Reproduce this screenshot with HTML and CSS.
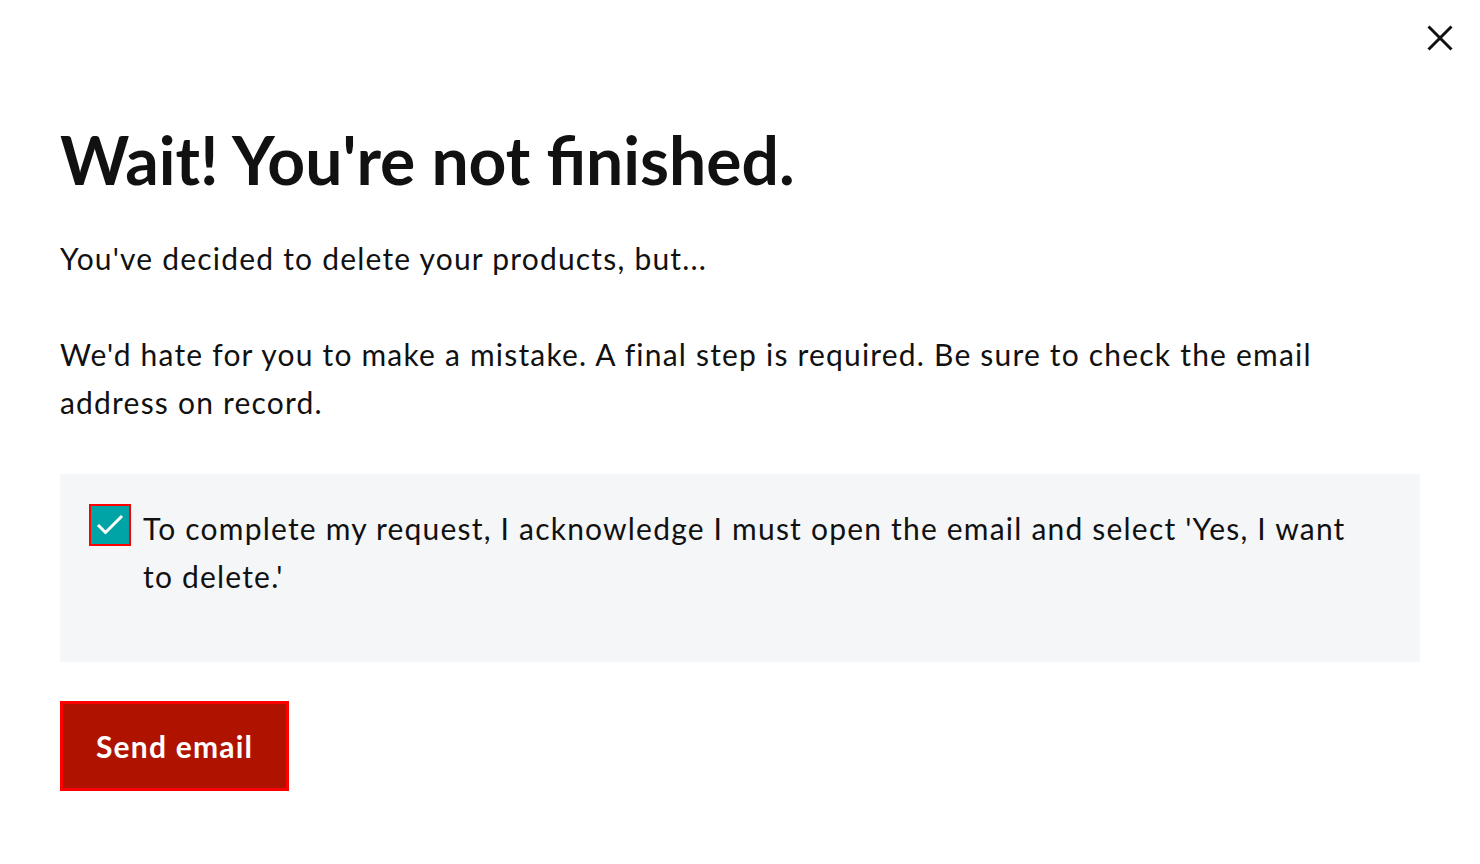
FILE: index.html
```html
<!DOCTYPE html>
<html lang="en">
<head>
<meta charset="utf-8">
<title>Wait! You're not finished.</title>
<link rel="stylesheet" href="styles.css">
</head>
<body>
<div class="dialog">
  <button class="close" aria-label="Close">
    <svg width="26" height="26" viewBox="0 0 26 26"><path d="M1.5 1.5 L24.5 24.5 M24.5 1.5 L1.5 24.5" stroke="#111" stroke-width="3" fill="none"/></svg>
  </button>
  <h1 class="title">Wait! You're not finished.</h1>
  <p class="text">You've decided to delete your products, but...</p>
  <p class="text">We'd hate for you to make a mistake. A final step is required. Be sure to check the email address on record.</p>
  <div class="ack">
    <label class="ack-row">
      <span class="check">
        <svg width="32" height="26" viewBox="0 0 32 26"><path d="M4 13 L11.5 20.5 L28 4" stroke="#fff" stroke-width="3" fill="none"/></svg>
      </span>
      <span class="ack-text">To complete my request, I acknowledge I must open the email and select 'Yes, I want to delete.'</span>
    </label>
  </div>
  <button class="send">Send email</button>
</div>
</body>
</html>
```
FILE: styles.css
```css
html, body {
  margin: 0;
  background: #fff;
}
body {
  font-family: Lato, "Noto Sans", sans-serif;
  color: #111;
}
.dialog {
  position: relative;
  padding: 112px 60px 40px 60px;
}
.close {
  position: absolute;
  top: 25px;
  right: 27px;
  background: none;
  border: 0;
  padding: 0;
  width: 26px;
  height: 26px;
  cursor: pointer;
}
.title {
  margin: 0 0 26px 0;
  font-size: 66px;
  font-weight: 700;
  line-height: 96px;
  color: #111;
}
.text {
  margin: 0 0 48px 0;
  font-size: 30px;
  letter-spacing: 1.2px;
  line-height: 48px;
  color: #111;
}
.ack {
  background: #f5f6f8;
  padding: 30px 40px 62px 29px;
  margin-bottom: 39px;
}
.ack-row {
  display: flex;
  align-items: flex-start;
  gap: 12px;
}
.check {
  flex: none;
  width: 38px;
  height: 38px;
  margin-top: 0;
  background: #00a4a6;
  border: 2px solid #ff0000;
  display: flex;
  align-items: center;
  justify-content: center;
}
.ack-text {
  font-size: 30px;
  letter-spacing: 1.2px;
  line-height: 48px;
  color: #111;
}
.send {
  background: #b01200;
  color: #fff;
  border: 3px solid #ff0000;
  font-family: inherit;
  font-size: 30px;
  letter-spacing: 1.2px;
  font-weight: 700;
  padding: 0 33px;
  height: 90px;
  cursor: pointer;
}
```
